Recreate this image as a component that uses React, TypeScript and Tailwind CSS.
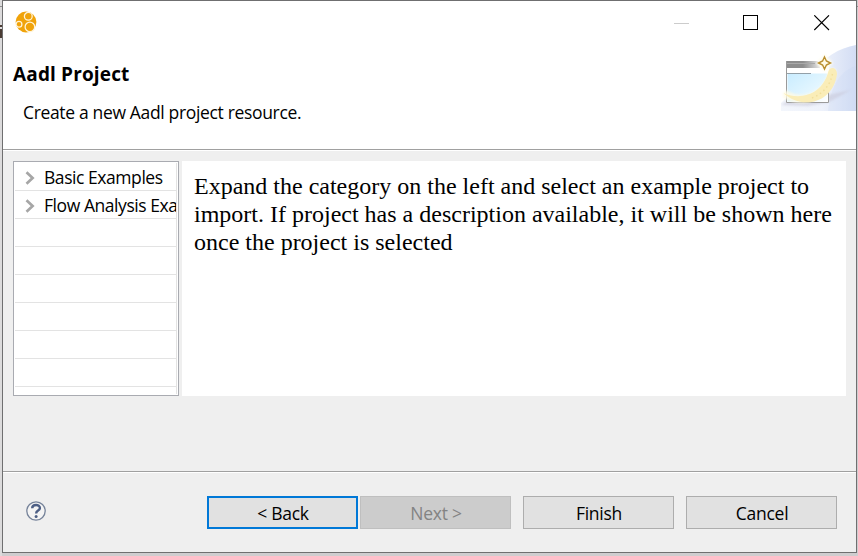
import type { ReactNode } from "react";

const UI_FONT = "font-['Segoe_UI','Open_Sans','Noto_Sans',sans-serif]";

function AppLogo() {
  return (
    <svg width="22" height="22" viewBox="0 0 22 22" className="block">
      <circle cx="11" cy="11" r="10.4" fill="#f0a30a" />
      <g fill="#f0a30a" stroke="#fff3d8" strokeWidth="1.3">
        <circle cx="13.3" cy="5.2" r="3.9" />
        <circle cx="4" cy="13.2" r="2.9" />
        <circle cx="14.9" cy="15.9" r="4.8" />
      </g>
    </svg>
  );
}

function WindowControls() {
  return (
    <svg width="158" height="16" viewBox="0 0 158 16" shapeRendering="crispEdges" className="block">
      <path d="M0 8.5H15" stroke="#cccccc" />
      <rect x="69.5" y="0.5" width="14" height="14" fill="none" stroke="#000" />
      <path d="M140.3 0.3L155 15M155 0.3L140.3 15" stroke="#000" strokeWidth="1.1" shapeRendering="auto" />
    </svg>
  );
}

function WizardBanner() {
  return (
    <svg width="75" height="66" viewBox="0 0 75 66" className="block">
      <defs>
        <linearGradient id="sky" x1="0" x2="1" y1="0" y2="0">
          <stop offset="0" stopColor="#f3f6fc" />
          <stop offset="0.55" stopColor="#eef2fb" />
          <stop offset="1" stopColor="#d3ddf4" />
        </linearGradient>
        <linearGradient id="bar" x1="0" x2="1" y1="0" y2="0">
          <stop offset="0.5" stopColor="#8d8d8d" />
          <stop offset="1" stopColor="#e4e4e4" />
        </linearGradient>
        <linearGradient id="pane" x1="0" x2="1" y1="0" y2="1">
          <stop offset="0" stopColor="#c9ecff" />
          <stop offset="0.6" stopColor="#e3f6ff" />
          <stop offset="1" stopColor="#ffffff" />
        </linearGradient>
        <filter id="soft" x="-20%" y="-20%" width="140%" height="140%">
          <feGaussianBlur stdDeviation="1.2" />
        </filter>
        <filter id="edge" x="-10%" y="-10%" width="120%" height="120%">
          <feGaussianBlur stdDeviation="0.6" />
        </filter>
      </defs>
      <path d="M75 0C58 3 42 13 34 26L0 58V66H75Z" fill="url(#sky)" />
      <path d="M75 21C60 25 50 40 47 66H75Z" fill="#c9d6f2" opacity="0.25" />
      <path d="M0 60L10 54H28L70 45L48 57L27 61Z" fill="#c9c9da" opacity="0.6" filter="url(#soft)" />
      <rect x="5" y="16" width="43" height="42" fill="#fff" />
      <rect x="5" y="16" width="34" height="7" fill="url(#bar)" />
      <path d="M6 18.5H34" stroke="#a9a9a9" />
      <rect x="6.5" y="28.5" width="40" height="28" fill="url(#pane)" />
      <path d="M6 28.5H30" stroke="#93a0a8" />
      <path d="M5.5 16V57.5H47.5V46" fill="none" stroke="#9a9a9a" />
      <path d="M6 50C24 60 47 50 51 27" fill="none" stroke="#fffbe4" strokeWidth="8" strokeLinecap="round" opacity="0.8" filter="url(#soft)" />
      <path d="M2.5 48C20 56 42 49 47.5 26C49 21 56 22 56 29C52 59 20 65 2.5 48Z" fill="#faedb8" filter="url(#edge)" />
      <path d="M51.5 29C49 40 43 48 31 53" fill="none" stroke="#f1df9c" strokeWidth="1.5" strokeDasharray="1.5 3" />
      <path d="M43.5 9L52 18L43.5 27L35 18Z" fill="#fffdf0" filter="url(#soft)" />
      <path d="M43.5 12L45.4 16L49.5 18L45.4 20L43.5 24L41.6 20L37.5 18L41.6 16Z" fill="#fffbe6" stroke="#b98e2e" strokeWidth="1.4" />
    </svg>
  );
}

function TreeItem({ children }: { children?: ReactNode }) {
  return (
    <div className="flex h-7 shrink-0 items-center border-b border-[#e3e3e3] pl-[10px]">
      {children && (
        <>
          <svg width="11" height="14" viewBox="0 0 11 14" className="mt-[2px] mr-[8px] shrink-0">
            <path d="M1.5 1.3L7.6 7L1.5 12.7" fill="none" stroke="#a6a6a6" strokeWidth="2.7" />
          </svg>
          <span className="whitespace-nowrap text-[17.5px] leading-6 tracking-[-0.44px]">{children}</span>
        </>
      )}
    </div>
  );
}

function Button({ children, className }: { children: ReactNode; className: string }) {
  return (
    <button className={`flex h-[33px] w-[151px] items-center justify-center pl-px text-[17.5px] leading-6 tracking-[-0.25px] ${className}`}>
      {children}
    </button>
  );
}

export default function App() {
  return (
    <div className={`relative h-[556px] w-[858px] overflow-hidden bg-[#cfcdcf] pr-px pb-[3px] pl-[2px] text-black ${UI_FONT}`}>
      {/* Slivers of the window behind the dialog */}
      <div className="absolute top-0 left-0 h-[556px] w-[2px] bg-[#dcdbdc]" />
      <div className="absolute top-[6px] left-0 h-px w-[2px] bg-[#8f8f8f]" />
      <div className="absolute top-[6px] left-[857px] h-px w-px bg-[#8f8f8f]" />
      <div className="absolute top-[25px] left-0 h-[2px] w-[2px] bg-[#4a3c34]" />
      <div className="absolute top-[29px] left-0 h-[9px] w-[2px] bg-[#4a3c34]" />
      <div className="flex h-[553px] w-[855px] flex-col border border-[#6f6f70] bg-[#efefef]">
        <header className="h-[148px] shrink-0 bg-white">
          <div className="flex h-11 items-start justify-between pt-[10px] pr-[24px] pl-[12px]">
            <AppLogo />
            <div className="pt-1">
              <WindowControls />
            </div>
          </div>
          <div className="flex justify-between">
            <div className="pt-[17px] pl-[10px]">
              <h1 className="text-[19px] leading-6 font-bold tracking-[0.15px]">Aadl Project</h1>
              <p className="mt-[14px] pl-[10px] text-[17.5px] leading-6 tracking-[-0.34px]">Create a new Aadl project resource.</p>
            </div>
            <WizardBanner />
          </div>
        </header>
        <div className="h-[2px] shrink-0 border-t border-[#a0a0a0] bg-white" />
        <main className="flex h-[320px] shrink-0 gap-[3px] pt-[10px] pl-[10px]">
          <div className="h-[235px] w-[166px] border border-[#a9abb1] bg-white p-px">
            <div className="flex h-[231px] flex-col overflow-hidden border-r border-[#e3e3e3]">
              <TreeItem>Basic Examples</TreeItem>
              <TreeItem>Flow Analysis Examples</TreeItem>
              <TreeItem />
              <TreeItem />
              <TreeItem />
              <TreeItem />
              <TreeItem />
              <TreeItem />
            </div>
          </div>
          <div className="h-[235px] w-[664px] bg-white pt-[11px] pl-[12px] font-['Times_New_Roman','Liberation_Serif',serif] text-[24px] leading-[28px]">
            Expand the category on the left and select an example project to
            <br />
            import. If project has a description available, it will be shown here
            <br />
            once the project is selected
          </div>
        </main>
        <div className="h-[2px] shrink-0 border-t border-[#a0a0a0] bg-white" />
        <footer className="flex pt-[23px] pl-[23px]">
          <svg width="20" height="20" viewBox="0 0 20 20" className="mt-[5px] mr-[161px] shrink-0">
            <circle cx="10" cy="10" r="9.2" fill="#f4f4f4" stroke="#76839a" strokeWidth="1.3" />
            <path d="M6.2 7.3C6.2 2.9 13.9 2.9 13.9 7C13.9 9.8 10.1 9.4 10.1 12.6" fill="none" stroke="#4d5f85" strokeWidth="2.4" />
            <circle cx="10.1" cy="15.5" r="1.5" fill="#4d5f85" />
          </svg>
          <Button className="border-2 border-[#0078d7] bg-[#e1e1e1]">&lt; Back</Button>
          <Button className="ml-[2px] border border-[#bfbfbf] bg-[#cccccc] text-[#838383]">Next &gt;</Button>
          <Button className="ml-[12px] border border-[#adadad] bg-[#e1e1e1]">Finish</Button>
          <Button className="ml-[12px] border border-[#adadad] bg-[#e1e1e1]">Cancel</Button>
        </footer>
      </div>
    </div>
  );
}
